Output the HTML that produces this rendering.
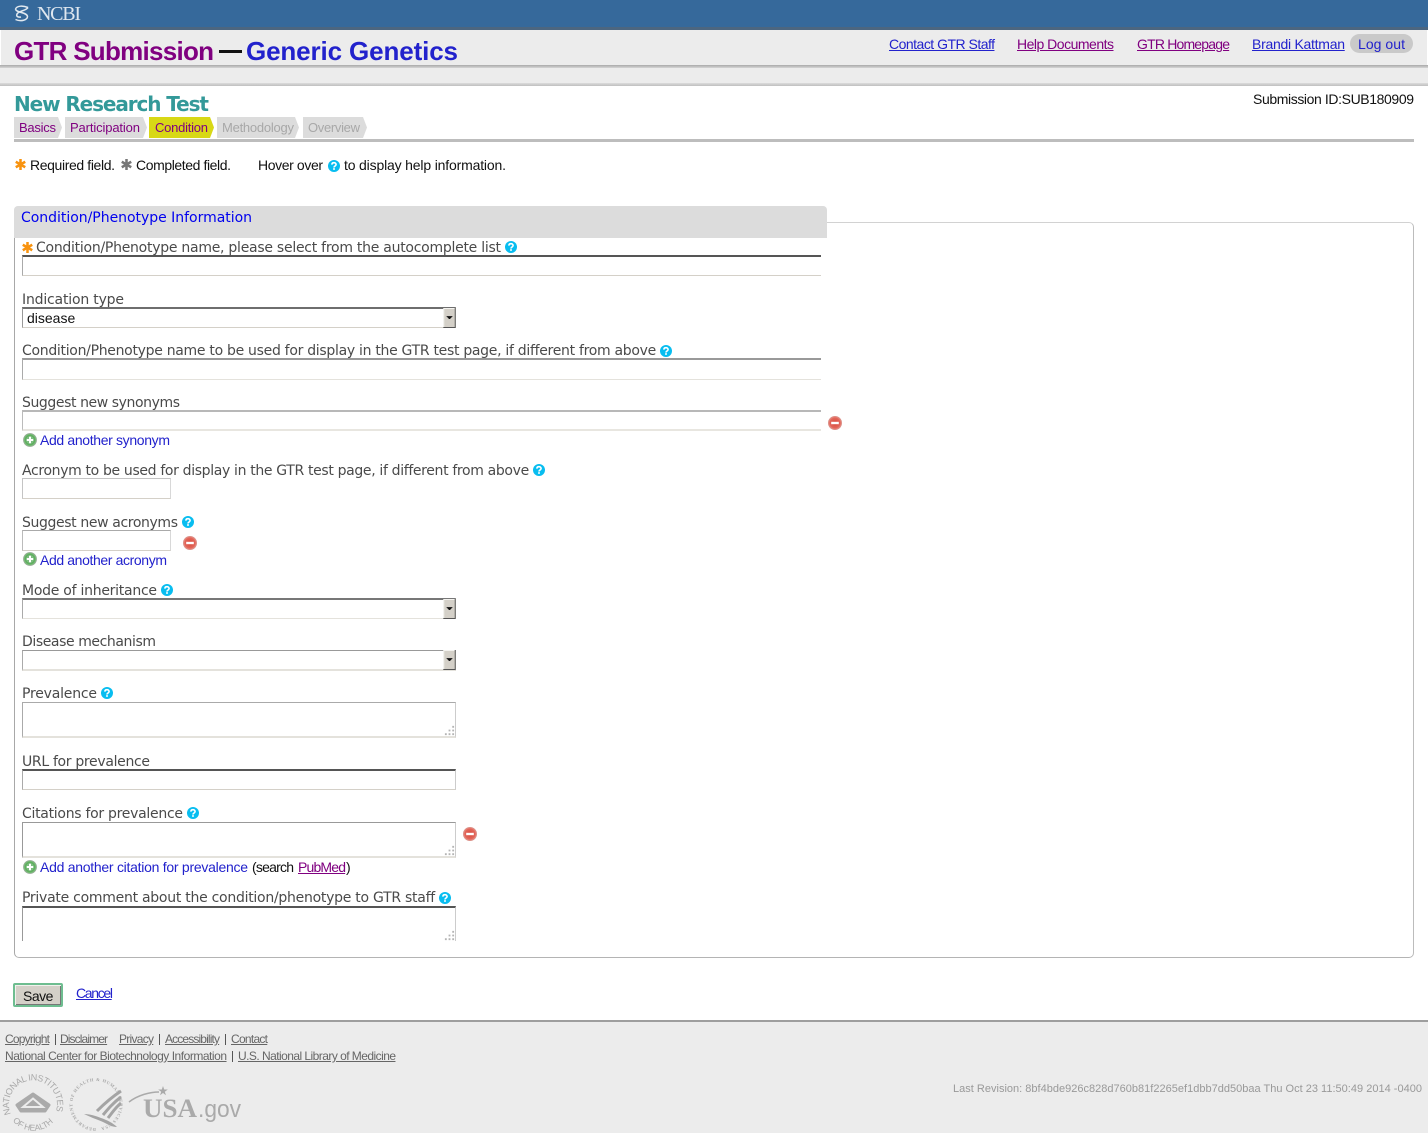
<!DOCTYPE html>
<html lang="en">
<head>
<meta charset="utf-8">
<title>GTR Submission</title>
<style>
html,body{margin:0;padding:0;background:#fff}
body{position:relative;width:1428px;height:1133px;overflow:hidden;font-family:"Liberation Sans",sans-serif;font-size:14px;color:#111}
.a,.t,.l,.s{position:absolute;white-space:nowrap}
.a{display:block}
.t{line-height:16px}
.l{line-height:16px;margin-top:1px;font-family:"DejaVu Sans",sans-serif;font-size:14px;color:#4a4a4a}
a{color:#2222cc;text-decoration:underline}
a.v{color:#800080}
a.b{color:#2222cc}
input,select,textarea{position:absolute;box-sizing:border-box;margin:0;padding:0 4px;background:#fff;border:1px solid #d4d0c8;border-radius:0;outline:0;resize:none;appearance:none;-webkit-appearance:none;font:14px "Liberation Sans",sans-serif;color:#111}
.tab{position:absolute;top:117px;height:21px}
.tab svg{position:absolute;left:0;top:0}
.ic{position:absolute}
.fl{position:absolute;left:5px;line-height:14px;font-size:12px;color:#666}
.fl a{color:#666;text-decoration-color:#888}
</style>
</head>
<body>
<svg width="0" height="0" style="position:absolute">
<defs>
<radialGradient id="gg" cx=".5" cy=".5" r=".55"><stop offset="0" stop-color="#3f9a48"/><stop offset=".7" stop-color="#62b062"/><stop offset="1" stop-color="#a4d4a0"/></radialGradient>
<radialGradient id="gr" cx=".5" cy=".5" r=".55"><stop offset="0" stop-color="#d84a3c"/><stop offset=".7" stop-color="#e2665a"/><stop offset="1" stop-color="#f0a69c"/></radialGradient>
<symbol id="h" viewBox="0 0 12 12"><circle cx="6" cy="6" r="6" fill="#08bdf0"/><path d="M3.900 4.600C3.900 3.400 4.800 2.700 6 2.700s2.100.7 2.100 1.800c0 1.500-2.100 1.500-2.100 3" fill="none" stroke="#fff" stroke-width="1.600"/><rect x="5.100" y="8.200" width="1.800" height="1.600" fill="#fff"/></symbol>
<symbol id="p" viewBox="0 0 14 14"><circle cx="7" cy="7" r="6.500" fill="url(#gg)" stroke="#93a893" stroke-width=".8"/><circle cx="7" cy="7" r="3.900" fill="#fff" opacity=".25"/><path d="M3.800 7h6.400M7 3.800v6.400" stroke="#fff" stroke-width="2"/></symbol>
<symbol id="m" viewBox="0 0 14 14"><circle cx="7" cy="7" r="6.600" fill="url(#gr)" stroke="#d99088" stroke-width=".8"/><path d="M3.200 7h7.600" stroke="#fff" stroke-width="2.400"/></symbol>
<symbol id="ast" viewBox="0 0 10 10"><path d="M5 0v10M.7 2.500l8.600 5M.7 7.500l8.600-5" stroke="currentColor" stroke-width="2.300"/></symbol>
<symbol id="grip" viewBox="0 0 12 12"><path d="M9 1h2v2H9zM5 5h2v2H5zM9 5h2v2H9zM1 9h2v2H1zM5 9h2v2H5zM9 9h2v2H9z" fill="#b4b4b4"/></symbol>
<symbol id="arrow" viewBox="0 0 13 21"><rect width="13" height="21" fill="#d4d0c8"/><path d="M0 0h12v1H1v19H0z" fill="#f4f3ef"/><path d="M12 0h1v21H0v-1h12z" fill="#555"/><path d="M3.500 8.500h6v1h-1v1h-1v1h-2v-1h-1v-1h-1z" fill="#111"/></symbol>
</defs>
</svg>

<!-- header -->
<div class="a" style="left:0;top:0;width:1428px;height:27px;background:#36699b"></div>
<div class="a" style="left:0;top:27px;width:1428px;height:3px;background:#4c6680"></div>
<div class="a" style="left:1px;top:30px;width:1426px;height:35px;background:#ececec"></div>
<div class="a" style="left:0;top:65px;width:1428px;height:3px;background:linear-gradient(#a9a9a9,#d5d5d5)"></div>
<div class="a" style="left:0;top:68px;width:1428px;height:15px;background:#ececec"></div>
<div class="a" style="left:0;top:83px;width:1428px;height:3px;background:linear-gradient(#dcdcdc,#bfbfbf)"></div>

<svg class="ic" style="left:13px;top:4px" width="17" height="19" viewBox="0 0 17 19"><path d="M2.500 5C4 1.500 10 1.500 15 3.500M2.500 5C3 9 14 8 14.500 12.500C14.500 16 8 18 2.500 15.500M15 3.500C13 7 6 6.500 4 10C3 12.500 5 13.500 8 13" fill="none" stroke="#e2e9f0" stroke-width="1.500"/></svg>
<span class="t" style="left:37px;top:6px;font:20px/16px 'Liberation Serif',serif;color:#dfe7ef;--w:44">NCBI</span>

<span class="t" style="left:14px;top:37px;font-weight:bold;font-size:26px;line-height:28px;color:#800080;--w:200">GTR Submission</span>
<div class="a" style="left:219px;top:50px;width:23px;height:3px;background:#111"></div>
<span class="t" style="left:246px;top:37px;font-weight:bold;font-size:26px;line-height:28px;color:#2222cc;--w:212">Generic Genetics</span>

<a class="t b" href="#" style="left:889px;top:36px;--w:106">Contact GTR Staff</a>
<a class="t v" href="#" style="left:1017px;top:36px;--w:97">Help Documents</a>
<a class="t v" href="#" style="left:1137px;top:36px;--w:93">GTR Homepage</a>
<a class="t b" href="#" style="left:1252px;top:36px;--w:93">Brandi Kattman</a>
<div class="a" style="left:1350px;top:34px;width:63px;height:19px;border-radius:10px;background:#c9c9c9"></div>
<a class="t b" href="#" style="left:1358px;top:36px;text-decoration:none;--w:47">Log out</a>

<span class="t" style="left:1253px;top:91px;color:#111;--w:161">Submission ID:SUB180909</span>
<span class="t" style="left:14px;top:92px;font:bold 20px/24px 'DejaVu Sans',sans-serif;color:#339999;--w:195">New Research Test</span>

<!-- tabs -->
<div class="tab" style="left:14px;width:48px"><svg width="48" height="21"><path d="M0 0H44L48 10.500 44 21H0z" fill="#dcdcdc"/></svg></div>
<a class="t v" href="#" style="left:19px;top:120px;text-decoration:none;font-size:13px;--w:37">Basics</a>
<div class="tab" style="left:65px;width:82px"><svg width="82" height="21"><path d="M0 0H78L82 10.500 78 21H0z" fill="#dcdcdc"/></svg></div>
<a class="t v" href="#" style="left:70px;top:120px;text-decoration:none;font-size:13px;--w:70">Participation</a>
<div class="tab" style="left:149px;width:65px"><svg width="65" height="21"><path d="M0 0H61L65 10.500 61 21H0z" fill="#d8d816"/></svg></div>
<a class="t v" href="#" style="left:155px;top:120px;text-decoration:none;font-size:13px;--w:53">Condition</a>
<div class="tab" style="left:217px;width:82px"><svg width="82" height="21"><path d="M0 0H78L82 10.500 78 21H0z" fill="#dcdcdc"/></svg></div>
<span class="t" style="left:222px;top:120px;font-size:13px;color:#a8a8a8;--w:72">Methodology</span>
<div class="tab" style="left:303px;width:64px"><svg width="64" height="21"><path d="M0 0H60L64 10.500 60 21H0z" fill="#dcdcdc"/></svg></div>
<span class="t" style="left:308px;top:120px;font-size:13px;color:#a8a8a8;--w:52">Overview</span>
<div class="a" style="left:14px;top:139px;width:1400px;height:3px;background:#bdbdbd"></div>

<!-- legend -->
<svg class="ic" style="left:15px;top:159px;color:#f8930f" width="11" height="11"><use href="#ast"/></svg>
<span class="t" style="left:30px;top:157px;--w:85">Required field.</span>
<svg class="ic" style="left:121px;top:159px;color:#777" width="11" height="11"><use href="#ast"/></svg>
<span class="t" style="left:136px;top:157px;--w:95">Completed field.</span>
<span class="t" style="left:258px;top:157px;--w:65">Hover over</span>
<svg class="ic" style="left:328px;top:160px" width="12" height="12"><use href="#h"/></svg>
<span class="t" style="left:344px;top:157px;--w:162">to display help information.</span>

<!-- fieldset -->
<div class="a" style="left:14px;top:222px;width:1398px;height:734px;border:1px solid #d2d2d2;border-left-color:#a8a8a8;border-bottom-color:#b4b4b4;border-right-color:#bcbcbc;border-radius:5px"></div>
<div class="a" style="left:14px;top:206px;width:813px;height:32px;background:#dcdcdc;border-radius:4px 4px 0 0"></div>
<span class="t" style="left:21px;top:210px;font:14px/16px 'DejaVu Sans',sans-serif;color:#0000ee;--w:231">Condition/Phenotype Information</span>

<svg class="ic" style="left:22px;top:242px;color:#f8930f" width="11" height="11"><use href="#ast"/></svg>
<span class="l" style="left:36px;top:239px;--w:465">Condition/Phenotype name, please select from the autocomplete list</span>
<svg class="ic" style="left:505px;top:241px" width="12" height="12"><use href="#h"/></svg>
<input type="text" style="left:22px;top:255px;width:799px;height:21px;border-top:2px solid #555;border-left:1px solid #aaa;border-right:0">

<span class="l" style="left:22px;top:291px;--w:102">Indication type</span>
<select style="left:22px;top:307px;width:434px;height:21px;border-top:2px solid #6e6e6e;border-left:1px solid #999"><option>disease</option></select>
<svg class="ic" style="left:443px;top:308px" width="13" height="20"><use href="#arrow"/></svg>

<span class="l" style="left:22px;top:342px;--w:634">Condition/Phenotype name to be used for display in the GTR test page, if different from above</span>
<svg class="ic" style="left:660px;top:345px" width="12" height="12"><use href="#h"/></svg>
<input type="text" style="left:22px;top:358px;width:799px;height:22px;border-top:2px solid #999;border-left:1px solid #aaa;border-right:0;border-bottom-color:#e4e2dc">

<span class="l" style="left:22px;top:394px;--w:158">Suggest new synonyms</span>
<input type="text" style="left:22px;top:410px;width:799px;height:21px;border-top:2px solid #b8b8b8;border-left:1px solid #bbb;border-right:0;border-bottom:2px solid #e8e6e0">
<svg class="ic" style="left:828px;top:416px" width="14" height="14"><use href="#m"/></svg>
<svg class="ic" style="left:23px;top:433px" width="14" height="14"><use href="#p"/></svg>
<a class="t b" href="#" style="left:40px;top:432px;text-decoration:none;--w:130">Add another synonym</a>

<span class="l" style="left:22px;top:462px;--w:507">Acronym to be used for display in the GTR test page, if different from above</span>
<svg class="ic" style="left:533px;top:464px" width="12" height="12"><use href="#h"/></svg>
<input type="text" style="left:22px;top:478px;width:149px;height:21px;border-top:1px solid #c4c4c4;border-left:1px solid #c4c4c4;border-right:1px solid #d8d8d8">

<span class="l" style="left:22px;top:514px;--w:156">Suggest new acronyms</span>
<svg class="ic" style="left:182px;top:516px" width="12" height="12"><use href="#h"/></svg>
<input type="text" style="left:22px;top:530px;width:149px;height:21px;border-top:1px solid #aaa;border-left:1px solid #bbb;border-right:1px solid #d8d8d8">
<svg class="ic" style="left:183px;top:536px" width="14" height="14"><use href="#m"/></svg>
<svg class="ic" style="left:23px;top:552px" width="14" height="14"><use href="#p"/></svg>
<a class="t b" href="#" style="left:40px;top:552px;text-decoration:none;--w:127">Add another acronym</a>

<span class="l" style="left:22px;top:582px;--w:135">Mode of inheritance</span>
<svg class="ic" style="left:161px;top:584px" width="12" height="12"><use href="#h"/></svg>
<select style="left:22px;top:598px;width:434px;height:21px;border-top:2px solid #777;border-left:1px solid #aaa;border-bottom-color:#e4e2dc"><option></option></select>
<svg class="ic" style="left:443px;top:599px" width="13" height="20"><use href="#arrow"/></svg>

<span class="l" style="left:22px;top:633px;--w:134">Disease mechanism</span>
<select style="left:22px;top:650px;width:434px;height:21px;border-top:1px solid #999;border-left:1px solid #aaa;border-bottom:2px solid #e4e2dc"><option></option></select>
<svg class="ic" style="left:443px;top:650px" width="13" height="20"><use href="#arrow"/></svg>

<span class="l" style="left:22px;top:685px;--w:75">Prevalence</span>
<svg class="ic" style="left:101px;top:687px" width="12" height="12"><use href="#h"/></svg>
<textarea style="left:22px;top:702px;width:434px;height:36px;border-top:1px solid #aaa;border-left:1px solid #aaa;border-right:1px solid #ccc;border-bottom:2px solid #e4e2dc"></textarea>
<svg class="ic" style="left:444px;top:725px" width="11" height="11"><use href="#grip"/></svg>

<span class="l" style="left:22px;top:753px;--w:128">URL for prevalence</span>
<input type="text" style="left:22px;top:769px;width:434px;height:21px;border-top:2px solid #555;border-left:1px solid #aaa;border-right:1px solid #ccc">

<span class="l" style="left:22px;top:805px;--w:161">Citations for prevalence</span>
<svg class="ic" style="left:187px;top:807px" width="12" height="12"><use href="#h"/></svg>
<textarea style="left:22px;top:822px;width:434px;height:36px;border-top:1px solid #999;border-left:1px solid #999;border-right:1px solid #ccc;border-bottom:2px solid #e4e2dc"></textarea>
<svg class="ic" style="left:444px;top:845px" width="11" height="11"><use href="#grip"/></svg>
<svg class="ic" style="left:463px;top:827px" width="14" height="14"><use href="#m"/></svg>
<svg class="ic" style="left:23px;top:860px" width="14" height="14"><use href="#p"/></svg>
<a class="t b" href="#" style="left:40px;top:859px;text-decoration:none;--w:208">Add another citation for prevalence</a>
<span class="t" style="left:252px;top:859px;--w:42">(search</span>
<a class="t v" href="#" style="left:298px;top:859px;--w:48">PubMed</a>
<span class="t" style="left:346px;top:859px">)</span>

<span class="l" style="left:22px;top:889px;--w:413">Private comment about the condition/phenotype to GTR staff</span>
<svg class="ic" style="left:439px;top:892px" width="12" height="12"><use href="#h"/></svg>
<textarea style="left:22px;top:906px;width:434px;height:35px;border-top:2px solid #555;border-left:1px solid #999;border-right:1px solid #ccc;border-bottom:0"></textarea>
<svg class="ic" style="left:444px;top:930px" width="11" height="11"><use href="#grip"/></svg>

<!-- actions -->
<button style="position:absolute;left:13px;top:983px;width:50px;height:24px;box-sizing:border-box;margin:0;padding:2px 0 0;border:2px solid #6ebd90;border-radius:2px;background:#d4d0c8;box-shadow:inset 1px 1px 0 #f2f1ed,inset -1px -1px 0 #777;font:14px 'Liberation Sans',sans-serif;letter-spacing:-.5px;color:#111">Save</button>
<a class="t b" href="#" style="left:76px;top:985px;--w:37">Cancel</a>

<!-- footer -->
<div class="a" style="left:0;top:1020px;width:1428px;height:113px;background:#ececec"></div>
<div class="a" style="left:0;top:1020px;width:1428px;height:2px;background:#9e9e9e"></div>
<a href="#" class="t" style="left:5px;top:1031px;font-size:12px;color:#666;--w:45">Copyright</a>
<div class="a" style="left:55px;top:1034px;width:1px;height:11px;background:#555"></div>
<a href="#" class="t" style="left:60px;top:1031px;font-size:12px;color:#666;--w:48">Disclaimer</a>
<a href="#" class="t" style="left:119px;top:1031px;font-size:12px;color:#666;--w:35">Privacy</a>
<div class="a" style="left:159px;top:1034px;width:1px;height:11px;background:#555"></div>
<a href="#" class="t" style="left:165px;top:1031px;font-size:12px;color:#666;--w:55">Accessibility</a>
<div class="a" style="left:225px;top:1034px;width:1px;height:11px;background:#555"></div>
<a href="#" class="t" style="left:231px;top:1031px;font-size:12px;color:#666;--w:37">Contact</a>
<a href="#" class="t" style="left:5px;top:1048px;font-size:12px;color:#666;--w:222">National Center for Biotechnology Information</a>
<div class="a" style="left:232px;top:1051px;width:1px;height:11px;background:#555"></div>
<a href="#" class="t" style="left:238px;top:1048px;font-size:12px;color:#666;--w:158">U.S. National Library of Medicine</a>
<span class="t" style="left:953px;top:1081px;font-size:11px;color:#999;--w:469">Last Revision: 8bf4bde926c828d760b81f2265ef1dbb7dd50baa Thu Oct 23 11:50:49 2014 -0400</span>

<svg class="ic" style="left:0;top:1070px" width="260" height="63" viewBox="0 0 260 63">
<defs>
<path id="nihTop" d="M11 44A24 24 0 1 1 55 44"/>
<path id="nihBot" d="M12 50A27 27 0 0 0 55 50"/>
<path id="hhsC" d="M96 58A23.500 23.500 0 1 1 96.100 58"/>
</defs>
<text font-family="Liberation Sans,sans-serif" font-size="9" fill="#a8a8a8"><textPath href="#nihTop" textLength="92">NATIONAL INSTITUTES</textPath></text>
<text font-family="Liberation Sans,sans-serif" font-size="8.500" fill="#a8a8a8"><textPath href="#nihBot" startOffset="1" textLength="46">OF HEALTH</textPath></text>
<path d="M33 24L49 35 45 41H21L17 35z" fill="#aaa" stroke="#aaa" stroke-width="3" stroke-linejoin="round"/>
<path d="M33 28.500L43 37H23z" fill="none" stroke="#ececec" stroke-width="2"/>
<text font-family="Liberation Serif,serif" font-size="4.500" font-weight="bold" fill="#a8a8a8"><textPath href="#hhsC" textLength="142">DEPARTMENT OF HEALTH &amp; HUMAN SERVICES USA</textPath></text>
<path d="M121 21C112 27 104 34 97 41M121 27C113 33 108 39 103 45M121 33C115 38 112 43 108 48" fill="none" stroke="#a4a4a4" stroke-width="3"/>
<path d="M84 44c6 0 12 2 17 4 6 2 12 5 16 9-5 0-8-2-12-4-6-3-13-5-21-9z" fill="#a4a4a4"/>
<path d="M129 32C138 25 150 22 159 22" fill="none" stroke="#aaa" stroke-width="1.500"/>
<path d="M163 16l1.200 3.500h3.600l-3 2.200 1.200 3.500-3-2.200-3 2.200 1.200-3.500-3-2.200h3.600z" fill="#aaa"/>
<text x="143" y="47" font-family="Liberation Serif,serif" font-weight="bold" font-size="26" fill="#aaa" textLength="54" lengthAdjust="spacingAndGlyphs">USA</text>
<text x="198" y="47" font-family="Liberation Sans,sans-serif" font-size="24" fill="#aaa" textLength="43" lengthAdjust="spacingAndGlyphs">.gov</text>
</svg>

<script>
document.querySelectorAll('span,a').forEach(function(e){
  var w=parseFloat(getComputedStyle(e).getPropertyValue('--w'));
  if(!w)return;
  var n=e.textContent.length;
  var d=(w-e.getBoundingClientRect().width)/Math.max(n-1,1);
  e.style.letterSpacing=d.toFixed(3)+'px';
});
</script>
</body>
</html>
